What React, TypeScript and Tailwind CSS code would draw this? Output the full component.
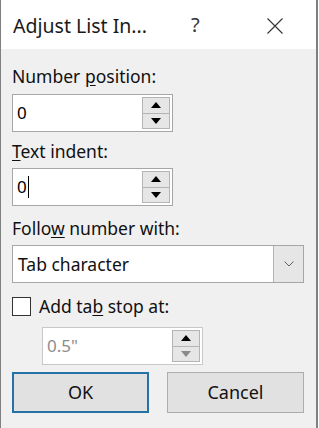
import React from "react";

const font = { fontFamily: '"Noto Sans", "Open Sans", sans-serif' };

function Spinner({ disabled }: { disabled?: boolean }) {
  return (
    <div className="flex flex-col w-[28px] h-[32px] mr-[2px]">
      <div className="flex-1 flex items-center justify-center bg-[#e6e6e6] border border-[#b4b4b4]">
        <svg width="10" height="6" viewBox="0 0 10 6">
          <polygon points="5,0 10,6 0,6" fill="#000" />
        </svg>
      </div>
      <div className="flex-1 flex items-center justify-center bg-[#e6e6e6] border border-t-0 border-[#b4b4b4]">
        <svg width="10" height="6" viewBox="0 0 10 6">
          <polygon points="0,0 10,0 5,6" fill={disabled ? "#8a8a8a" : "#000"} />
        </svg>
      </div>
    </div>
  );
}

function SpinInput({ value, caret, disabled }: { value: string; caret?: boolean; disabled?: boolean }) {
  return (
    <div
      className={`flex items-center w-[161px] h-[38px] border ${disabled ? "border-[#c8c8c8]" : "border-[#a6a6a6]"} bg-white`}
    >
      <div className={`flex-1 pl-[4px] text-[17px] leading-[24px] flex items-center ${disabled ? "text-[#8d8d8d]" : "text-black"}`}>
        {value}
        {caret && <span className="inline-block w-[1px] h-[22px] bg-black ml-[1px]" />}
      </div>
      <Spinner disabled={disabled} />
    </div>
  );
}

export default function App() {
  return (
    <div className="w-[319px] h-[428px] bg-white flex overflow-hidden" style={font}>
      <div className="w-[318px] h-[428px] flex flex-col border-l border-r-2 border-[#808080]">
        <div className="h-[49px] bg-white flex items-center text-[#1a1a1a] shrink-0">
          <div className="pl-[12px] text-[19.5px] leading-[28px] pt-[2px] w-[190px]">Adjust List In...</div>
          <div className="text-[20px] leading-[28px] pt-[1px] w-[76px] text-[#333]">?</div>
          <svg width="16" height="16" viewBox="0 0 16 16" className="mt-[2px]">
            <path d="M0.5 0.5 L15.5 15.5 M15.5 0.5 L0.5 15.5" stroke="#333" strokeWidth="1.1" fill="none" />
          </svg>
        </div>
        <div className="flex-1 bg-[#f0f0f0] flex flex-col pl-[11px] pt-[15px] text-[#111]">
          <div className="text-[17.5px] leading-[24px]">
            Number <span className="underline underline-offset-2">p</span>osition:
          </div>
          <div className="mt-[6px]">
            <SpinInput value="0" />
          </div>
          <div className="mt-[7px] text-[17.5px] leading-[24px]">
            <span className="underline underline-offset-2">T</span>ext indent:
          </div>
          <div className="mt-[5px]">
            <SpinInput value="0" caret />
          </div>
          <div className="mt-[10px] text-[17.5px] leading-[24px]">
            Follo<span className="underline underline-offset-2">w</span> number with:
          </div>
          <div className="mt-[5px] w-[292px] h-[38px] border border-[#a6a6a6] bg-white flex items-stretch">
            <div className="flex-1 pl-[5px] flex items-center text-[17.5px] leading-[24px]">Tab character</div>
            <div className="w-[30px] bg-[#e6e6e6] border-l border-[#b4b4b4] flex items-center justify-center">
              <svg width="10" height="6" viewBox="0 0 10 6">
                <path d="M0.5 0.5 L5 5 L9.5 0.5" stroke="#606060" strokeWidth="1" fill="none" />
              </svg>
            </div>
          </div>
          <div className="mt-[11px] flex items-center h-[24px]">
            <div className="w-[19px] h-[19px] border border-[#333] bg-white" />
            <div className="ml-[8px] text-[17.5px] leading-[24px]">
              Add ta<span className="underline underline-offset-2">b</span> stop at:
            </div>
          </div>
          <div className="mt-[9px] ml-[30px]">
            <div className="h-[37px] flex">
              <SpinInput value={'0.5"'} disabled />
            </div>
          </div>
          <div className="mt-[8px] flex gap-[18px]">
            <div className="w-[137px] h-[41px] bg-[#e1e1e1] border-2 border-[#2472a8] flex items-center justify-center text-[18px]">
              OK
            </div>
            <div className="w-[137px] h-[41px] bg-[#e1e1e1] border border-[#adadad] flex items-center justify-center text-[18px]">
              Cancel
            </div>
          </div>
        </div>
      </div>
    </div>
  );
}
